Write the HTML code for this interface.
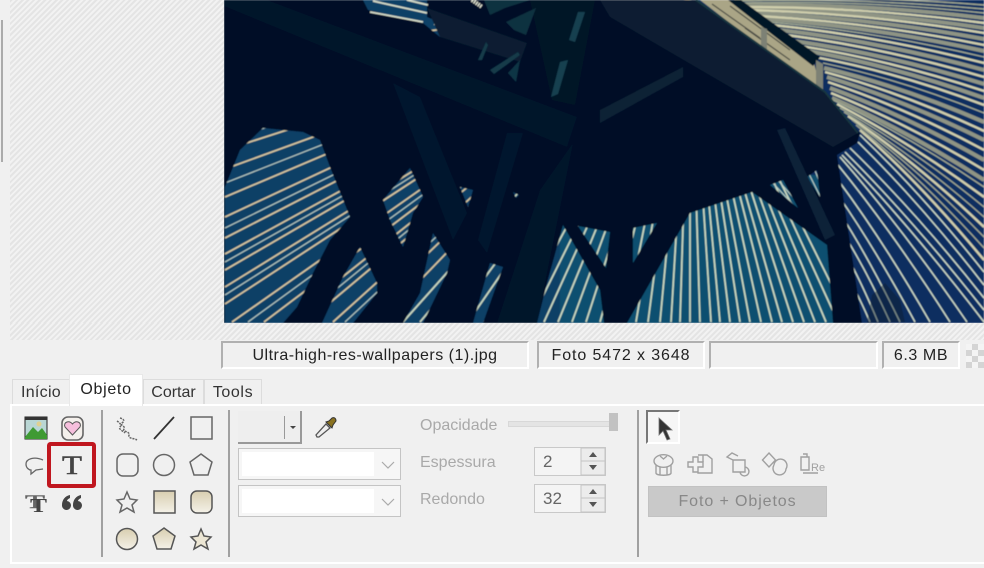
<!DOCTYPE html>
<html style="overflow:hidden;height:568px;"><head><meta charset="utf-8">
<style>
html,body{margin:0;padding:0;}
body{width:984px;height:568px;overflow:hidden;background:#f0f0f0;position:relative;font-family:"Liberation Sans",sans-serif;}
div{position:absolute;box-sizing:border-box;}
.stripe{background:repeating-linear-gradient(135deg,#e4e4e4 0,#e4e4e4 2px,#f2f2f2 2px,#f2f2f2 4px);}
.cell{top:341px;height:28px;background:#f0f0f0;border-top:2px solid #b0b0b0;border-left:2px solid #b0b0b0;border-right:2px solid #fff;border-bottom:2px solid #fff;font-size:16px;line-height:25px;color:#222;text-align:center;white-space:nowrap;}
.tab{background:#f0f0f0;border:1px solid #dcdcdc;border-bottom:none;font-size:16px;color:#333;text-align:center;line-height:26px;white-space:nowrap;}
.sep{width:2px;top:410px;height:147px;background:#a0a0a0;}
.lbl{font-size:16px;color:#a9a9a9;left:420px;line-height:20px;white-space:nowrap;}
.inp{left:238px;width:163px;background:#f6f6f6;border:1px solid #c4c4c4;}
.inp i{position:absolute;left:3px;top:3px;width:132px;bottom:3px;background:#fff;display:block;}
.spin{left:534px;width:72px;height:29px;background:#f4f4f4;border:1px solid #c9c9c9;font-size:17px;color:#666;line-height:28px;padding-left:8px;}
</style></head>
<body>
<div id="root" style="left:0;top:0;width:984px;height:568px;overflow:hidden;">
<div class="stripe" style="left:10px;top:0;width:214px;height:323px;"></div>
<div class="stripe" style="left:10px;top:323px;width:974px;height:17px;"></div>
<div style="left:1px;top:20px;width:2px;height:142px;background:#ababab;"></div>

<svg style="position:absolute;left:224px;top:0;overflow:hidden;" width="760" height="323" viewBox="224 0 760 323" xmlns="http://www.w3.org/2000/svg">
<defs><filter id="b" x="0" y="0" width="1" height="1"><feGaussianBlur stdDeviation="0.5"/></filter></defs>
<g filter="url(#b)">
<rect x="224" y="0" width="760" height="323" fill="#0f4066"/>
<rect x="700" y="0" width="284" height="323" fill="#0e2f60"/>
<rect x="560" y="175" width="280" height="148" fill="#0f5070"/>
<g fill="none">
<path stroke="#8f9484" stroke-width="4" d="M745 5Q865 3.500 984 18M749 9Q866 10.500 984 28M755 13Q870 18 984 39M765 19Q874 27 984 51M780 30Q882 42 984 70M794 41Q889 54.500 984 84M808 51Q896 66.500 984 98M824 68Q904 87 984 122M827 77Q905 100.500 984 140M830 88Q907 116 984 160M832 98Q908 131 984 180"/>
<path stroke="#cfceac" stroke-width="2.400" d="M747 7Q865 7 984 23M750 10Q867 13.500 984 33M760 16Q872 22.500 984 45M773 25Q878 36 984 63M787 35Q885 48 984 77M801 46Q892 60.500 984 91M815 57Q900 73 984 105M825 72Q904 93.500 984 131M828 82Q906 108 984 150M831 93Q907 123.500 984 170M837 104Q910 142.500 984 197M848 116Q916 162 984 227M860 130Q922 185 984 260"/>
<path stroke="#9ea590" stroke-width="1.400" d="M735 0Q860 -5 984 5M740 1Q862 -2 984 9M743 3Q864 0 984 13M769 22Q876 31.500 984 57M823 63Q903 80 984 113M833 100Q908 135.500 984 187M840 108Q912 148 984 207M844 112Q914 155 984 217M852 120Q918 169 984 237M856 125Q920 177 984 248"/>
<path stroke="#c8d6c4" stroke-width="1.500" d="M860 135Q922 194 984 272M858 142Q921 204 984 285M850 148Q917 213 984 298M845 152Q914 221 984 310M842 155Q913 229 984 322M840 157Q903 229 967 322M838 165Q894 234 950 322M838 180Q884 242 930 322M838 195Q876 250 915 322M838 210Q869 258 900 322M838 225Q864 265 890 322M838 240Q858 274 878 322M838 260Q854 285 870 322"/>
<path stroke="#c9d8c0" stroke-width="1.700" d="M690 0L850 322M690 0L838 322M690 0L826 322M690 0L815 322M690 0L804 322M690 0L793 322M690 0L782 322M690 0L772 322M690 0L761 322M690 0L750 322M690 0L740 322M690 0L730 322M690 0L720 322M690 0L711 322M690 0L700 322M690 0L690 322M690 0L680 322M690 0L671 322M690 0L660 322M690 0L648 322M690 0L636 322M690 0L625 322M690 0L612 322M690 0L600 322M690 0L586 322M690 0L572 322M690 0L558 322M690 0L544 322M690 0L530 322M690 0L515 322M690 0L500 322M690 0L484 322M690 0L468 322M690 0L452 322M690 0L436 322M690 0L420 322M690 0L403 322"/>
<path stroke="#d8c8a0" stroke-width="1.600" d="M690 0L380 322M690 0L357 322M690 0L333 322M690 0L307 322M690 0L286 322M690 0L264 322M690 0L232 322M690 0L225 304M690 0L225 287M690 0L225 270M690 0L225 254M690 0L225 238M690 0L225 217M690 0L225 197M690 0L225 169M690 0L225 150M690 0L225 128M690 0L225 106M690 0L225 80M690 0L225 55"/>
<path stroke="#b9cdc4" stroke-width="1.100" d="M690 0L345 322M690 0L296 322M690 0L248 322M690 0L225 295M690 0L225 262M690 0L225 228M690 0L225 183M690 0L225 140M770 180L800 212M776 178L806 212M808 172L822 200M814 168L826 198"/>
</g>
<path d="M867 323L872 295L885 283L900 300L905 322Z" fill="#0a2030" opacity=".45"/>
<!-- railing -->
<path d="M700 0H732L813 60L823 95Z" fill="#aaa586"/>
<path d="M712 4L760 38M730 6L790 50M745 28L790 60" stroke="#4a4c44" stroke-width="1.200" fill="none"/>
<path d="M728 0H741L820 57L813 66Z" fill="#041428"/>
<path d="M761 27l6 2v26l-6-3zM816 60l7 4v32l-7-4z" fill="#7d8174"/>
<!-- main dark structure with sky holes -->
<path fill-rule="evenodd" fill="#020b26" d="M224 0H696L820 90L860 133L857 143L837 155L862 323H224Z
M225 187L240 150L263 128L303 132L320 140L330 167L350 217L330 240L313 273L297 307L283 323H225Z
M322 323L343 277L360 247L377 283L377 293L353 323Z
M383 200L410 168L420 190L423 197L413 213L403 247L390 220Z
M460 187L473 190L468 207Z
M513 192L519 195L516 198Z
M420 293L433 233L450 260L447 273L423 323H403Z
M490 263L503 267L483 323H473Z
M537 323L547 283L563 225L600 290L604 323Z
M578 226L610 232L606 268Z
M633 228L657 223L633 263Z
M690 213L752 192L827 245L833 323H627Z
M770 185L783 180L798 208Z
M807 177L817 170L820 197Z
M363 0H427V17L453 28L440 37L423 23L368 10Z"/>
<!-- top hole streaks -->
<path d="M373 1L427 13M370 12L423 22M434 24L453 29M407 0L428 5" stroke="#d4dbc8" stroke-width="1.700" fill="none"/>
<path d="M472 0L482 7" stroke="#dfe2d0" stroke-width="4" stroke-dasharray="1.500 1"/>
<!-- lighter beams, low contrast -->
<path d="M267 0L577 117L567 147L224 6V0Z" fill="#04142c"/>
<path d="M393 83L420 97L467 213L453 240Z" fill="#04172f"/>
<path d="M507 133L523 133L487 253L478 240Z" fill="#04172f"/>
<path d="M573 143L537 323H497L540 190Z" fill="#04142c"/>
<path d="M600 110L683 67L683 77L600 123Z" fill="#0a2436"/>
<path d="M650 0H696L825 92L858 133L833 147L610 17L600 0Z" fill="#081d31"/>
<path d="M696 0L825 92L858 133" stroke="#16353f" stroke-width="2" fill="none"/>
<path d="M777 130L785 128L835 235L825 240Z" fill="#0a2338"/>
<!-- upper-centre lattice -->
<path d="M530 0H595L575 105L552 100Z" fill="#051627"/>
<path d="M427 8L527 43L520 62L440 37Z" fill="#071f31"/>
<path d="M484 0H530L505 8L490 15Z" fill="#0f3040"/>
<path d="M506 22L536 8L526 35L514 30Z" fill="#11303f"/>
<path d="M478 60L486 42L488 45L482 60ZM490 70L518 52L520 55L494 74Z" fill="#123a4a"/>
<path d="M508 73L520 60L516 82Z" fill="#0f3444"/>
<path d="M569 40L578 12L585 12L575 42ZM551 97L560 62L568 60L558 94Z" fill="#174150"/>
</g>
</svg>

<!-- status -->
<div class="cell" style="left:221px;width:308px;letter-spacing:.5px;">Ultra-high-res-wallpapers (1).jpg</div>
<div class="cell" style="left:537px;width:168px;letter-spacing:.9px;">Foto 5472 x 3648</div>
<div class="cell" style="left:709px;width:169px;"></div>
<div class="cell" style="left:882px;width:78px;letter-spacing:.6px;">6.3 MB</div>
<div style="left:966px;top:344px;width:18px;height:24px;background:repeating-conic-gradient(#d4d4d4 0 25%,#f4f4f4 0 50%) 0 0/12px 12px;"></div>

<!-- tabs -->
<div class="tab" style="left:12px;top:379px;width:58px;height:26px;letter-spacing:.3px;">Início</div>
<div class="tab" style="left:143px;top:379px;width:61px;height:26px;">Cortar</div>
<div class="tab" style="left:204px;top:379px;width:58px;height:26px;letter-spacing:.6px;">Tools</div>

<!-- panel -->
<div style="left:10px;top:404px;width:974px;height:160px;border:2px solid #fff;border-right:none;background:#f0f0f0;"></div>
<div class="tab" style="left:69px;top:374px;width:74px;height:32px;background:#fff;border-color:#e8e8e8;color:#222;line-height:29px;letter-spacing:.7px;">Objeto</div>

<div class="sep" style="left:101px;"></div>
<div class="sep" style="left:228px;"></div>
<div class="sep" style="left:637px;"></div>

<!-- left icons -->
<svg style="position:absolute;left:0;top:400px;" width="240" height="168" viewBox="0 400 240 168" xmlns="http://www.w3.org/2000/svg">
<rect x="25" y="417" width="22" height="22" fill="#b9d6d4" stroke="#222" stroke-width="1"/>
<rect x="25" y="417" width="22" height="3" fill="#333"/>
<circle cx="39" cy="424" r="2.500" fill="#e0d090"/>
<path d="M25 437L33 427L38 432L42 428L47 435V439H25Z" fill="#3f9a33"/>
<rect x="62" y="417" width="21" height="23" rx="6" fill="#f4f0ec" stroke="#666" stroke-width="1.600"/>
<path d="M72.500 435L65 427C63 422 69 420 72.500 424C76 420 82 422 80 427Z" fill="#f6bfdc" stroke="#555" stroke-width="1"/>
<path d="M43 460C34 456 26 459 26 464C26 468 29 470 31 470L31 474L36 470L43 469" fill="none" stroke="#666" stroke-width="1.300"/>
<rect x="49" y="444" width="45" height="42" rx="1.500" fill="none" stroke="#c0171f" stroke-width="4"/>
<text x="62" y="474" textLength="20" lengthAdjust="spacingAndGlyphs" font-family="Liberation Serif,serif" font-size="26" fill="#444" stroke="#444" stroke-width=".5">T</text>
<text x="25" y="508" textLength="20" lengthAdjust="spacingAndGlyphs" font-family="Liberation Serif,serif" font-size="19" fill="#666" stroke="#666" stroke-width=".4">T</text>
<text x="30" y="512" textLength="17" lengthAdjust="spacingAndGlyphs" font-family="Liberation Serif,serif" font-size="20" font-weight="bold" fill="#444">T</text>
<path d="M62 505C62 500 65 496 70 495L70 498C68 499 67 500 67 501A4.500 4.500 0 1 1 62 505ZM73 505C73 500 76 496 81 495L81 498C79 499 78 500 78 501A4.500 4.500 0 1 1 73 505Z" fill="#444"/>
<g fill="none" stroke="#666" stroke-width="1.500">
<path d="M120 418c4 1 5 3 2 5s4 3 2 6 6 2 5 6 5 3 8 5M117 421c3 2 5 4 3 6s3 4 5 6" stroke-dasharray="2 1"/>
<path d="M154 439L174 417" stroke="#333" stroke-width="1.800"/>
<rect x="191" y="417" width="21" height="22"/>
<rect x="117" y="454" width="21" height="22" rx="6"/>
<circle cx="164" cy="465" r="10.500"/>
<path d="M201 454L212 462L208 475H194L190 462Z"/>
<path d="M127 492L130 499L137 500L132 505L134 512L127 508L120 512L122 505L117 500L124 499Z"/>
</g>
<defs><linearGradient id="h2" x1="0" y1="0" x2="0" y2="1"><stop offset="0" stop-color="#d8ceb0"/><stop offset="1" stop-color="#f4f1e8"/></linearGradient></defs>
<g fill="url(#h2)" stroke="#555" stroke-width="1.500">
<rect x="154" y="491" width="21" height="22"/>
<rect x="191" y="491" width="21" height="22" rx="6"/>
<circle cx="127" cy="539" r="10.500"/>
<path d="M164 528L175 536L171 549H157L153 536Z"/>
</g>
<path d="M201 529L204 536L211 537L206 542L208 549L201 545L194 549L196 542L191 537L198 536Z" fill="#ece6d4" stroke="#555" stroke-width="1.500"/>
</svg>

<!-- colour combo -->
<div style="left:238px;top:411px;width:64px;height:33px;background:#eeeeee;border-right:2px solid #999;border-bottom:2px solid #999;"></div>
<div style="left:284px;top:416px;width:1px;height:23px;background:#999;"></div>
<div style="left:290px;top:426px;width:0;height:0;border-left:3px solid transparent;border-right:3px solid transparent;border-top:3px solid #444;"></div>
<svg style="position:absolute;left:314px;top:416px;" width="24" height="24" viewBox="0 0 24 24" xmlns="http://www.w3.org/2000/svg">
<path d="M3 21L2 19L12 8L16 12L5 21Z" fill="#eee" stroke="#555" stroke-width="1.300"/>
<path d="M12 6L18 12L19 9L22 5C22 2 20 1 18 2L15 5Z" fill="#8a7220" stroke="#333" stroke-width="1"/>
</svg>

<div class="inp" style="top:448px;height:32px;"><i></i></div>
<div class="inp" style="top:485px;height:32px;"><i></i></div>
<svg style="position:absolute;left:380px;top:458px;" width="18" height="50" viewBox="0 0 18 50" xmlns="http://www.w3.org/2000/svg"><path d="M2 4L8 10L14 4M2 41L8 47L14 41" fill="none" stroke="#aaa" stroke-width="1.200"/></svg>

<div class="lbl" style="top:416px;">Opacidade</div>
<div class="lbl" style="top:453px;">Espessura</div>
<div class="lbl" style="top:490px;">Redondo</div>

<div style="left:508px;top:421px;width:106px;height:6px;background:#e4e4e4;border:1px solid #d8d8d8;"></div>
<div style="left:609px;top:413px;width:9px;height:18px;background:#c2c2c2;"></div>

<div class="spin" style="top:447px;">2</div>
<div class="spin" style="top:484px;">32</div>
<svg style="position:absolute;left:580px;top:447px;" width="26" height="67" viewBox="0 0 26 67" xmlns="http://www.w3.org/2000/svg">
<g fill="#ececec" stroke="#c4c4c4"><rect x="1" y="1" width="24" height="13"/><rect x="1" y="14" width="24" height="14"/><rect x="1" y="38" width="24" height="13"/><rect x="1" y="51" width="24" height="14"/></g>
<path d="M9 10L13 5L17 10ZM9 18L13 23L17 18ZM9 47L13 42L17 47ZM9 55L13 60L17 55Z" fill="#555"/>
</svg>

<!-- right -->
<div style="left:646px;top:410px;width:34px;height:34px;background:#f6f6f6;border-top:2px solid #777;border-left:2px solid #777;border-right:2px solid #fff;border-bottom:2px solid #fff;"></div>
<svg style="position:absolute;left:640px;top:405px;" width="190" height="80" viewBox="640 405 190 80" xmlns="http://www.w3.org/2000/svg">
<path d="M659 418L659 435L663 431L667 440L670 439L666 430L672 430Z" fill="#333" stroke="#777" stroke-width=".8"/>
<g fill="none" stroke="#a0a0a0" stroke-width="1.400">
<path d="M654 461a9 6 0 0 1 19 0a9 6 0 0 1-19 0M656 465V473c0 3 15 3 15 0V465M660 467V475M667 467V475M660 456l3.500 3 3.500-3"/>
<path d="M698 455h9l5 4v14h-14v-1M703 462v-7"/>
<path d="M693 457h5v5h5v5h-5v5h-5v-5h-5v-5h5Z"/>
<path d="M733 460h12v12h-12ZM733 460l-6-3 5-4 6 3 M745 467a4.500 4.500 0 1 1-5 5"/>
<path d="M769 453l6.500 7-6.500 7-6.500-7ZM774 465a6.500 6.500 0 1 0 12 4a6.500 6.500 0 1 0-12-4"/>
<path d="M801 457h8v13h-8ZM803 454h4v3M803 473h15"/>
</g>
<text x="811" y="471" font-family="Liberation Sans,sans-serif" font-size="11" fill="#a0a0a0">Re</text>
</svg>
<div style="left:648px;top:486px;width:179px;height:31px;background:#c9c9c9;border:1px solid #c2c2c2;font-size:16px;color:#888;text-align:center;line-height:30px;letter-spacing:.9px;">Foto + Objetos</div>
</div>
</body></html>
